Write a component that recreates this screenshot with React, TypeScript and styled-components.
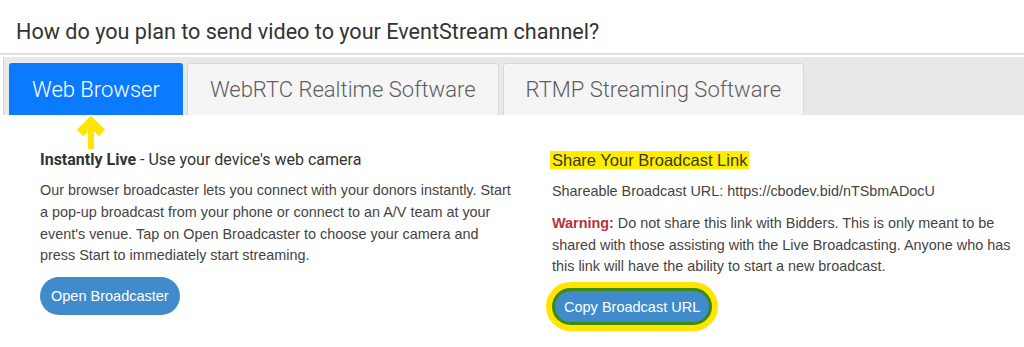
import React from "react"
import styled, { createGlobalStyle } from "styled-components"

const GlobalStyle = createGlobalStyle`
  body {
    margin: 0;
    background: #fff;
    font-family: "Liberation Sans", Arial, sans-serif;
  }
`

const Page = styled.div`
  width: 1024px;
  height: 347px;
  overflow: hidden;
`

const Title = styled.h2`
  margin: 0;
  height: 55px;
  padding-left: 16px;
  font-family: Roboto, "Liberation Sans", sans-serif;
  font-weight: 400;
  font-size: 21.6px;
  color: #333;
  border-bottom: 2px solid #dedede;
  box-sizing: border-box;
  line-height: 64px;
`

const TabBar = styled.div`
  position: relative;
  margin: 2px 0 0 3px;
  height: 58px;
  box-sizing: border-box;
  padding: 6px 5px 0;
  display: flex;
  gap: 4px;
  background: #e8e8e8;
  border-left: 1px solid #d4d4d4;
`

const Tab = styled.div<{ $active?: boolean }>`
  height: 52px;
  box-sizing: border-box;
  padding: 0 22px;
  display: flex;
  align-items: center;
  font-family: Roboto, "Liberation Sans", sans-serif;
  font-weight: 300;
  font-size: 22px;
  border-radius: 3px 3px 0 0;
  border: 1px solid ${(p) => (p.$active ? "#0a7bff" : "#d8d8d8")};
  border-bottom: none;
  background: ${(p) => (p.$active ? "#0a7bff" : "#f5f5f5")};
  color: ${(p) => (p.$active ? "#fff" : "#5e5e5e")};
`

const Arrow = styled.svg`
  position: absolute;
  left: 72px;
  top: 56px;
`

const Columns = styled.div`
  display: grid;
  grid-template-columns: 512px 1fr;
  padding: 34px 10px 0 40px;
`

const Column = styled.div<{ $width: number }>`
  width: ${(p) => p.$width}px;
`

const Heading = styled.div`
  font-family: Roboto, "Liberation Sans", sans-serif;
  font-size: 16px;
  color: #333;
  line-height: 22px;
  margin-bottom: 9px;

  b {
    font-weight: 700;
  }
`

const Highlight = styled.span`
  background: #ffec00;
  padding: 0 2px;
  margin-left: -2px;
  color: #3a3a1a;
  font-family: "Liberation Sans", Arial, sans-serif;
  font-size: 16.5px;
`

const Text = styled.p`
  margin: 0 0 10px;
  font-size: 14.4px;
  line-height: 21.8px;
  color: #444;
`

const Warn = styled.b`
  color: #b3343a;
`

const PillButton = styled.button<{ $marked?: boolean }>`
  margin-top: ${(p) => (p.$marked ? "0" : "0")};
  height: ${(p) => (p.$marked ? "37px" : "38px")};
  padding: 0 ${(p) => (p.$marked ? "9px" : "11px")};
  border-radius: 19px;
  border: ${(p) => (p.$marked ? "3px solid #3d8a0e" : "none")};
  box-shadow: ${(p) => (p.$marked ? "0 0 0 6px #ffe500" : "none")};
  background: #3f8bcb;
  color: #fff;
  font-family: "Liberation Sans", Arial, sans-serif;
  font-size: 14.5px;
`

export default function App() {
  return (
    <Page>
      <GlobalStyle />
      <Title>How do you plan to send video to your EventStream channel?</Title>
      <TabBar>
        <Tab $active>Web Browser</Tab>
        <Tab>WebRTC Realtime Software</Tab>
        <Tab>RTMP Streaming Software</Tab>
        <Arrow width="30" height="36" viewBox="0 0 30 36">
          <polyline
            points="4,20 15,9 26,20"
            fill="none"
            stroke="#ffe500"
            strokeWidth="9"
            strokeLinejoin="miter"
          />
          <rect x="12" y="10" width="6" height="26" fill="#ffe500" />
        </Arrow>
      </TabBar>
      <Columns>
        <Column $width={474}>
          <Heading>
            <b>Instantly Live</b> - Use your device's web camera
          </Heading>
          <Text>
            Our browser broadcaster lets you connect with your donors instantly. Start
            a pop-up broadcast from your phone or connect to an A/V team at your
            event's venue. Tap on Open Broadcaster to choose your camera and press
            Start to immediately start streaming.
          </Text>
          <PillButton>Open Broadcaster</PillButton>
        </Column>
        <Column $width={466}>
          <Heading>
            <Highlight>Share Your Broadcast Link</Highlight>
          </Heading>
          <Text>Shareable Broadcast URL: https://cbodev.bid/nTSbmADocU</Text>
          <Text>
            <Warn>Warning:</Warn> Do not share this link with Bidders. This is only
            meant to be shared with those assisting with the Live Broadcasting. Anyone
            who has this link will have the ability to start a new broadcast.
          </Text>
          <PillButton $marked>Copy Broadcast URL</PillButton>
        </Column>
      </Columns>
    </Page>
  )
}
